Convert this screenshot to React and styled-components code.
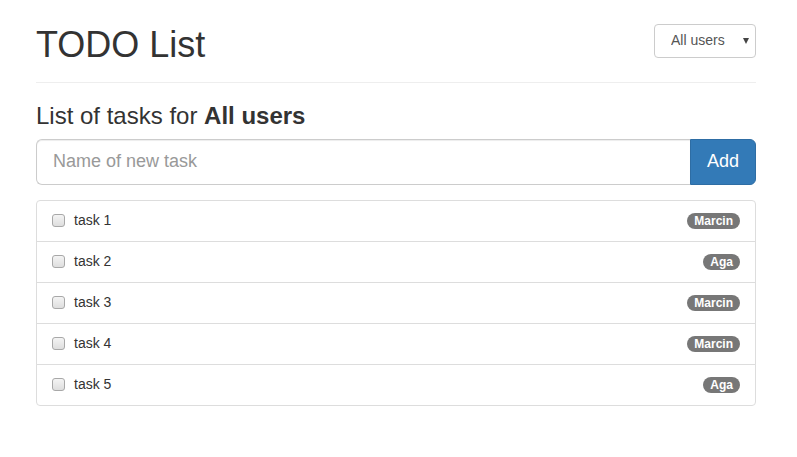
import React, { useState } from 'react';
import styled, { createGlobalStyle } from 'styled-components';

const GlobalStyle = createGlobalStyle`
  * { box-sizing: border-box; }
  body {
    margin: 0;
    background: #fff;
    color: #333;
    font-family: "Liberation Sans", Arial, sans-serif;
    font-size: 14px;
    line-height: 1.42857;
  }
`;

const Container = styled.div`
  width: 720px;
  margin-left: 36px;
`;

const PageHeader = styled.header`
  display: flex;
  justify-content: space-between;
  align-items: flex-start;
  padding-top: 24px;
  padding-bottom: 9px;
  border-bottom: 1px solid #eee;
`;

const Title = styled.h1`
  margin: 1px 0 8px;
  font-size: 36px;
  font-weight: 400;
  line-height: 1.1;
`;

const SelectWrap = styled.div`
  position: relative;
  width: 102px;
`;

const UserSelect = styled.select`
  appearance: none;
  width: 100%;
  height: 34px;
  padding: 0 24px 0 16px;
  border: 1px solid #ccc;
  border-radius: 4px;
  background: #fff;
  color: #555;
  font: inherit;
  font-size: 14px;
`;

const Caret = styled.span`
  position: absolute;
  right: 7px;
  top: 14px;
  width: 0;
  height: 0;
  border-left: 3px solid transparent;
  border-right: 3px solid transparent;
  border-top: 6px solid #444;
  pointer-events: none;
`;

const SubTitle = styled.h3`
  margin: 20px 0 10px;
  font-size: 24px;
  font-weight: 400;
  line-height: 1.1;

  strong { font-weight: 700; }
`;

const InputGroup = styled.form`
  display: flex;
  height: 46px;
  margin-bottom: 15px;
`;

const TaskInput = styled.input`
  flex: 1;
  min-width: 0;
  height: 46px;
  padding: 10px 16px;
  border: 1px solid #ccc;
  border-right: 0;
  border-radius: 6px 0 0 6px;
  font: inherit;
  font-size: 18px;
  color: #555;
  box-shadow: inset 0 1px 1px rgba(0, 0, 0, 0.075);
  outline: none;

  &::placeholder { color: #999; }
`;

const AddButton = styled.button`
  height: 46px;
  padding: 10px 16px;
  border: 1px solid #2e6da4;
  border-radius: 0 6px 6px 0;
  background: #337ab7;
  color: #fff;
  font: inherit;
  font-size: 18px;
  line-height: 1.33;
  cursor: pointer;
`;

const ListGroup = styled.ul`
  margin: 0;
  padding: 0;
  list-style: none;
`;

const ListItem = styled.li`
  display: flex;
  align-items: center;
  height: 42px;
  padding: 10px 15px;
  margin-bottom: -1px;
  border: 1px solid #ddd;
  background: #fff;

  &:first-child { border-radius: 4px 4px 0 0; }
  &:last-child { border-radius: 0 0 4px 4px; margin-bottom: 0; }
`;

const Check = styled.input`
  appearance: none;
  width: 13px;
  height: 13px;
  margin: 0 9px 0 0;
  border: 1px solid #a8a8a8;
  border-radius: 3px;
  background: linear-gradient(#f4f4f4, #dedede);
  flex-shrink: 0;

  &:checked {
    background: #337ab7;
    border-color: #2e6da4;
  }
`;

const TaskName = styled.span`
  flex: 1;
  color: ${p => (p.$done ? '#999' : '#333')};
  text-decoration: ${p => (p.$done ? 'line-through' : 'none')};
`;

const Badge = styled.span`
  display: inline-block;
  padding: 2px 7px;
  border-radius: 10px;
  background: #777;
  color: #fff;
  font-size: 12px;
  font-weight: 700;
  line-height: 1;
`;

const initialTasks = [
  { id: 1, name: 'task 1', user: 'Marcin', done: false },
  { id: 2, name: 'task 2', user: 'Aga', done: false },
  { id: 3, name: 'task 3', user: 'Marcin', done: false },
  { id: 4, name: 'task 4', user: 'Marcin', done: false },
  { id: 5, name: 'task 5', user: 'Aga', done: false },
];

export default function App() {
  const [tasks, setTasks] = useState(initialTasks);
  const [user, setUser] = useState('All users');
  const [name, setName] = useState('');

  const toggle = id => {
    setTasks(tasks.map(t => (t.id === id ? { ...t, done: !t.done } : t)));
  };

  const addTask = e => {
    e.preventDefault();
    if (!name.trim()) return;
    const owner = user === 'All users' ? 'Marcin' : user;
    setTasks([...tasks, { id: Date.now(), name, user: owner, done: false }]);
    setName('');
  };

  const visible = user === 'All users' ? tasks : tasks.filter(t => t.user === user);

  return (
    <>
      <GlobalStyle />
      <Container>
        <PageHeader>
          <Title>TODO List</Title>
          <SelectWrap>
            <UserSelect value={user} onChange={e => setUser(e.target.value)}>
              <option>All users</option>
              <option>Marcin</option>
              <option>Aga</option>
            </UserSelect>
            <Caret />
          </SelectWrap>
        </PageHeader>
        <SubTitle>
          List of tasks for <strong>{user}</strong>
        </SubTitle>
        <InputGroup onSubmit={addTask}>
          <TaskInput
            placeholder="Name of new task"
            value={name}
            onChange={e => setName(e.target.value)}
          />
          <AddButton type="submit">Add</AddButton>
        </InputGroup>
        <ListGroup>
          {visible.map(task => (
            <ListItem key={task.id}>
              <Check type="checkbox" checked={task.done} onChange={() => toggle(task.id)} />
              <TaskName $done={task.done}>{task.name}</TaskName>
              <Badge>{task.user}</Badge>
            </ListItem>
          ))}
        </ListGroup>
      </Container>
    </>
  );
}
